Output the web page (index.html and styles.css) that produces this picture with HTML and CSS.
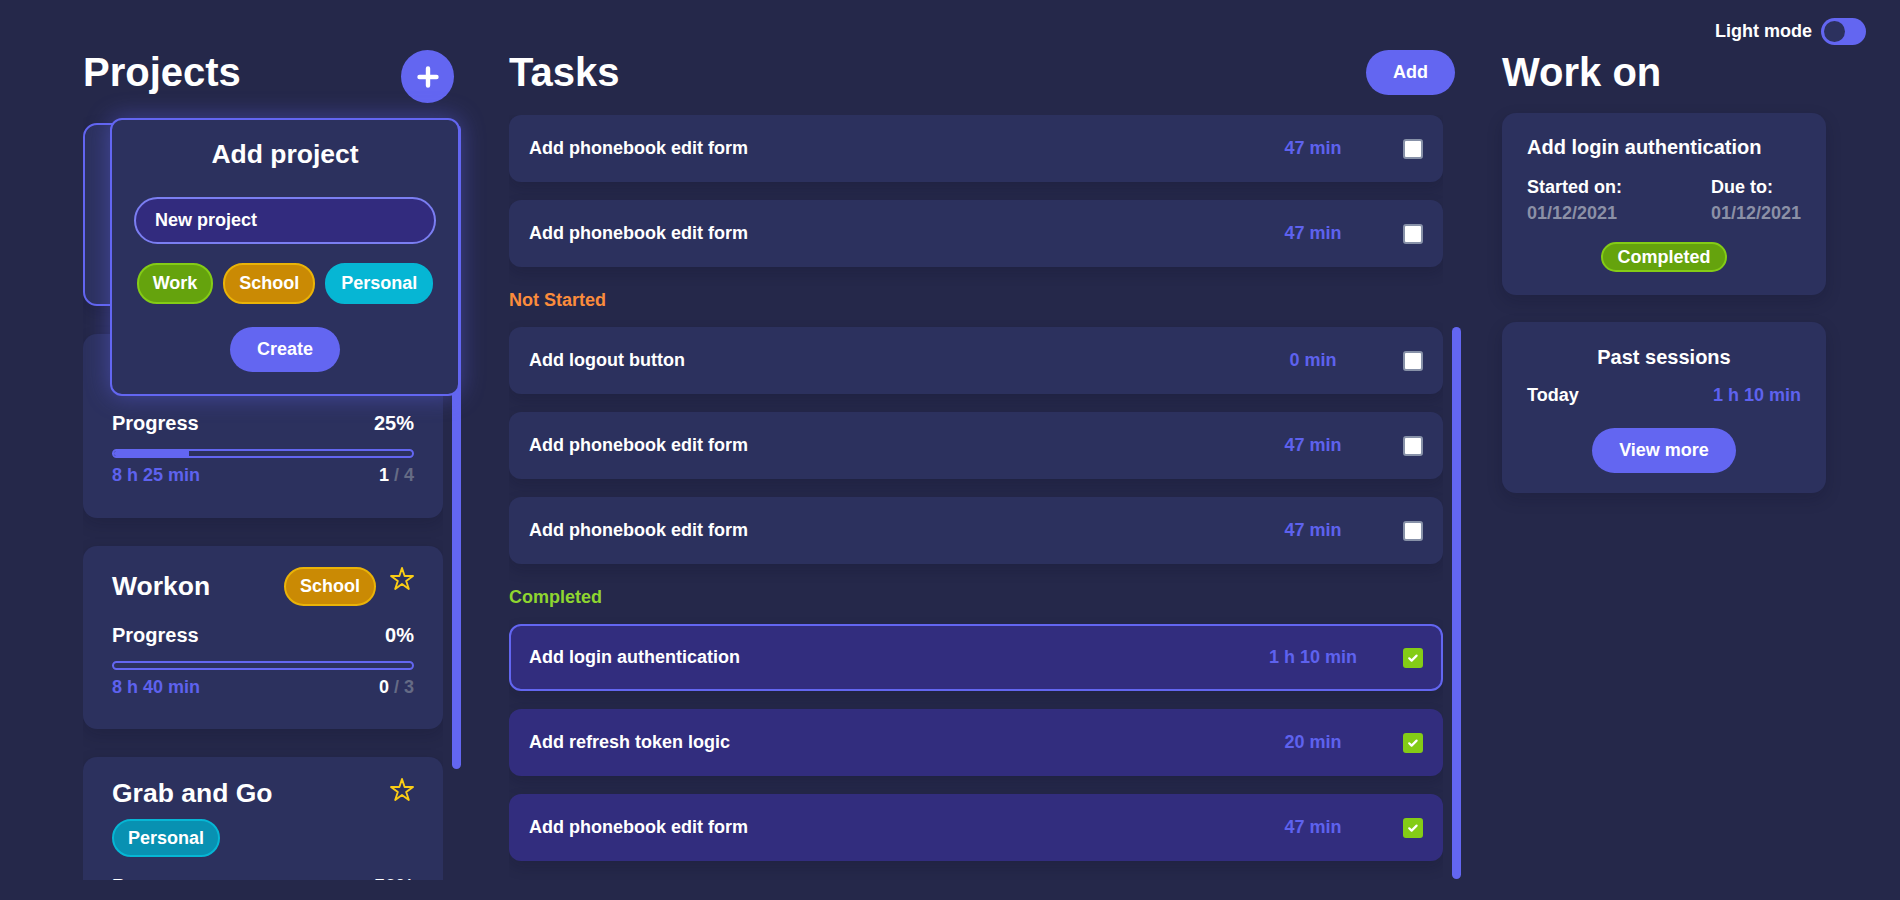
FILE: index.html
```html
<!DOCTYPE html>
<html lang="en">
<head>
<meta charset="utf-8">
<title>Workon</title>
<link rel="stylesheet" href="styles.css">
</head>
<body>
<div class="page">
  <header class="topbar">
    <span class="mode-label">Light mode</span>
    <span class="toggle"><span class="knob"></span></span>
  </header>

  <main class="columns">
    <!-- PROJECTS -->
    <section class="col col-projects">
      <div class="col-head">
        <h1>Projects</h1>
        <button class="round-add" aria-label="Add project">
          <svg width="22" height="22" viewBox="0 0 22 22"><path d="M11 2.5v17M2.5 11h17" stroke="#fff" stroke-width="4.4" stroke-linecap="round" fill="none"/></svg>
        </button>
      </div>

      <div class="list-wrap proj-wrap">
        <div class="list proj-list">
          <article class="pcard selected">
            <div class="ptitle-row">
              <span class="ptitle">Phonebook</span>
              <span class="tag tag-work">Work</span>
              <svg class="star" width="24" height="24" viewBox="0 0 24 24"><path d="M12 1L14.6 8.99H23L16.2 13.94L18.8 21.93L12 16.99L5.2 21.93L7.8 13.94L1 8.99H9.4Z"/></svg>
            </div>
            <div class="progress-row"><span>Progress</span><span>50%</span></div>
            <div class="bar"><div class="fill" style="width:50%"></div></div>
            <div class="time-row"><span class="ptime">3 h 15 min</span><span class="count">2 <span class="muted">/ 4</span></span></div>
          </article>

          <article class="pcard">
            <div class="ptitle-row">
              <span class="ptitle">Todo app</span>
              <span class="tag tag-work">Work</span>
              <svg class="star" width="24" height="24" viewBox="0 0 24 24"><path d="M12 1L14.6 8.99H23L16.2 13.94L18.8 21.93L12 16.99L5.2 21.93L7.8 13.94L1 8.99H9.4Z"/></svg>
            </div>
            <div class="progress-row"><span>Progress</span><span>25%</span></div>
            <div class="bar"><div class="fill" style="width:25%"></div></div>
            <div class="time-row"><span class="ptime">8 h 25 min</span><span class="count">1 <span class="muted">/ 4</span></span></div>
          </article>

          <article class="pcard">
            <div class="ptitle-row">
              <span class="ptitle">Workon</span>
              <span class="tag tag-school">School</span>
              <svg class="star" width="24" height="24" viewBox="0 0 24 24"><path d="M12 1L14.6 8.99H23L16.2 13.94L18.8 21.93L12 16.99L5.2 21.93L7.8 13.94L1 8.99H9.4Z"/></svg>
            </div>
            <div class="progress-row"><span>Progress</span><span>0%</span></div>
            <div class="bar"><div class="fill" style="width:0%"></div></div>
            <div class="time-row"><span class="ptime">8 h 40 min</span><span class="count">0 <span class="muted">/ 3</span></span></div>
          </article>

          <article class="pcard">
            <div class="ptitle-row">
              <span class="ptitle">Grab and Go</span>
              <svg class="star" width="24" height="24" viewBox="0 0 24 24"><path d="M12 1L14.6 8.99H23L16.2 13.94L18.8 21.93L12 16.99L5.2 21.93L7.8 13.94L1 8.99H9.4Z"/></svg>
            </div>
            <div class="tag-row"><span class="tag tag-personal">Personal</span></div>
            <div class="progress-row"><span>Progress</span><span>50%</span></div>
            <div class="bar"><div class="fill" style="width:50%"></div></div>
            <div class="time-row"><span class="ptime">2 h 05 min</span><span class="count">1 <span class="muted">/ 2</span></span></div>
          </article>
        </div>
        <div class="scrollbar"><div class="thumb" style="margin-top:12px;height:644px"></div></div>
      </div>

      <div class="popup">
        <h2>Add project</h2>
        <input class="proj-input" type="text" value="New project">
        <div class="popup-tags">
          <span class="tag ptag tag-work">Work</span>
          <span class="tag ptag tag-school">School</span>
          <span class="tag ptag tag-personal-on">Personal</span>
        </div>
        <button class="pill-btn create">Create</button>
      </div>
    </section>

    <!-- TASKS -->
    <section class="col col-tasks">
      <div class="col-head">
        <h1>Tasks</h1>
        <button class="pill-btn add">Add</button>
      </div>

      <div class="list-wrap task-wrap">
        <div class="list task-list">
          <div class="task"><span class="task-title">Add phonebook edit form</span><span class="task-time">47 min</span><span class="check"></span></div>
          <div class="task"><span class="task-title">Add phonebook edit form</span><span class="task-time">47 min</span><span class="check"></span></div>

          <div class="group-label notstarted">Not Started</div>
          <div class="task"><span class="task-title">Add logout button</span><span class="task-time">0 min</span><span class="check"></span></div>
          <div class="task"><span class="task-title">Add phonebook edit form</span><span class="task-time">47 min</span><span class="check"></span></div>
          <div class="task"><span class="task-title">Add phonebook edit form</span><span class="task-time">47 min</span><span class="check"></span></div>

          <div class="group-label completed">Completed</div>
          <div class="task done active"><span class="task-title">Add login authentication</span><span class="task-time">1 h 10 min</span><span class="check on"><svg width="12" height="12" viewBox="0 0 12 12"><path d="M2.2 6.3l2.4 2.3 5-5" stroke="#fff" stroke-width="2.2" fill="none" stroke-linecap="round" stroke-linejoin="round"/></svg></span></div>
          <div class="task done"><span class="task-title">Add refresh token logic</span><span class="task-time">20 min</span><span class="check on"><svg width="12" height="12" viewBox="0 0 12 12"><path d="M2.2 6.3l2.4 2.3 5-5" stroke="#fff" stroke-width="2.2" fill="none" stroke-linecap="round" stroke-linejoin="round"/></svg></span></div>
          <div class="task done"><span class="task-title">Add phonebook edit form</span><span class="task-time">47 min</span><span class="check on"><svg width="12" height="12" viewBox="0 0 12 12"><path d="M2.2 6.3l2.4 2.3 5-5" stroke="#fff" stroke-width="2.2" fill="none" stroke-linecap="round" stroke-linejoin="round"/></svg></span></div>
        </div>
        <div class="scrollbar"><div class="thumb" style="margin-top:212px;height:552px"></div></div>
      </div>
    </section>

    <!-- WORK ON -->
    <section class="col col-work">
      <div class="col-head">
        <h1>Work on</h1>
      </div>

      <article class="wcard">
        <div class="wtitle">Add login authentication</div>
        <div class="dates">
          <div class="date-col">
            <div>Started on:</div>
            <div class="date">01/12/2021</div>
          </div>
          <div class="date-col">
            <div>Due to:</div>
            <div class="date">01/12/2021</div>
          </div>
        </div>
        <div class="badge-row"><span class="badge">Completed</span></div>
      </article>

      <article class="wcard sessions">
        <div class="wtitle center">Past sessions</div>
        <div class="session-row"><span>Today</span><span class="stime">1 h 10 min</span></div>
        <div class="btn-row"><button class="pill-btn">View more</button></div>
      </article>
    </section>
  </main>
</div>
</body>
</html>
```

FILE: styles.css
```css
* { box-sizing: border-box; }

html, body {
  margin: 0;
  height: 100%;
}

body {
  background: #25284a;
  color: #fff;
  font-family: "Liberation Sans", Arial, sans-serif;
  font-weight: 700;
  overflow: hidden;
}

.page {
  height: 900px;
  display: flex;
  flex-direction: column;
}

/* top bar */
.topbar {
  height: 45px;
  padding: 18px 34px 0 0;
  display: flex;
  justify-content: flex-end;
  align-items: center;
  gap: 9px;
  font-size: 18px;
}

.toggle {
  width: 45px;
  height: 27px;
  border-radius: 14px;
  background: #6366f1;
  padding: 3px;
  display: flex;
}

.knob {
  width: 21px;
  height: 21px;
  border-radius: 50%;
  background: #2c315e;
}

/* columns */
.columns {
  flex: 1;
  min-height: 0;
  display: flex;
  padding: 4px 0 20px 83px;
}

.col {
  display: flex;
  flex-direction: column;
  min-height: 0;
}

.col-projects { width: 378px; position: relative; }
.col-tasks { width: 952px; margin-left: 48px; }
.col-work { width: 324px; margin-left: 41px; }

.col-head {
  height: 56px;
  flex: none;
  display: flex;
  justify-content: space-between;
  align-items: flex-start;
}

h1 {
  margin: 0;
  font-size: 40px;
  line-height: 46px;
  font-weight: 700;
}

button {
  font-family: inherit;
  font-weight: 700;
  color: #fff;
  border: none;
  cursor: pointer;
}

.round-add {
  width: 53px;
  height: 53px;
  margin: 1px 7px 0 0;
  border-radius: 50%;
  background: #6366f1;
  display: flex;
  align-items: center;
  justify-content: center;
  padding: 0;
}

.pill-btn {
  background: #6366f1;
  border-radius: 23px;
  font-size: 18px;
  line-height: 21px;
  padding: 12px 27px;
}

.pill-btn.add { margin: 1px 6px 0 0; }

/* list areas with a styled scrollbar */
.list-wrap {
  flex: 1;
  min-height: 0;
  display: flex;
  gap: 9px;
}

.list {
  flex: 1;
  min-width: 0;
  overflow: hidden;
}

.scrollbar {
  width: 9px;
  flex: none;
}

.thumb {
  width: 9px;
  background: #6366f1;
  border-radius: 5px;
}

.proj-wrap { margin-top: 8px; }
.proj-list { padding-top: 10px; }

.task-wrap { margin-top: 10px; }

/* project cards */
.pcard {
  background: #2c315e;
  border: 2px solid transparent;
  border-radius: 14px;
  padding: 19px 27px 30px;
  margin-bottom: 28px;
  box-shadow: 0 6px 16px rgba(10, 12, 35, 0.18);
}

.pcard.selected { border-color: #6366f1; }

.ptitle-row {
  display: flex;
  align-items: center;
  gap: 14px;
}

.ptitle {
  flex: 1;
  font-size: 26.5px;
  line-height: 30.5px;
}

.star {
  align-self: flex-start;
  flex: none;
  fill: none;
  stroke: #facc15;
  stroke-width: 1.9;
  stroke-linejoin: round;
}

.tag-row {
  display: flex;
  margin-top: 10px;
}

.tag {
  border: 2px solid;
  border-radius: 20px;
  padding: 7px 14px;
  font-size: 18px;
  line-height: 20.7px;
  color: #fff;
}

.tag-work { background: #65a30d; border-color: #84cc16; }
.tag-school { background: #ca8a04; border-color: #eab308; }
.tag-personal { background: #0891b2; border-color: #06b6d4; }
.tag-personal-on { background: #06b6d4; border-color: #06b6d4; }

.progress-row {
  display: flex;
  justify-content: space-between;
  margin-top: 18px;
  font-size: 20px;
  line-height: 23px;
}

.bar {
  height: 9px;
  margin-top: 14px;
  border: 2px solid #6366f1;
  border-radius: 5px;
  overflow: hidden;
}

.fill {
  height: 100%;
  background: #6366f1;
}

.time-row {
  display: flex;
  justify-content: space-between;
  margin-top: 7px;
  font-size: 18px;
  line-height: 20.7px;
}

.ptime { color: #5e62ee; }
.muted { color: #656b85; }

/* popup */
.popup {
  position: absolute;
  top: 69px;
  left: 27px;
  width: 350px;
  z-index: 5;
  background: #2c315e;
  border: 2px solid #6366f1;
  border-radius: 12px;
  padding: 19px 22px 22px;
  text-align: center;
  box-shadow: 0 0 24px rgba(99, 102, 241, 0.45);
}

.popup h2 {
  margin: 0 0 27.5px;
  font-size: 26.5px;
  line-height: 30.5px;
  font-weight: 700;
}

.proj-input {
  display: block;
  width: 100%;
  height: 47px;
  border: 2px solid #7b7ef2;
  border-radius: 24px;
  background: #322b7e;
  color: #fff;
  font-family: inherit;
  font-weight: 700;
  font-size: 18px;
  padding: 0 19px;
  outline: none;
}

.popup-tags {
  display: flex;
  justify-content: center;
  gap: 10px;
  margin-top: 19px;
}

.ptag { padding: 8px 14px; }

.pill-btn.create { margin-top: 23px; }

/* tasks */
.group-label {
  font-size: 18px;
  line-height: 21px;
  padding-top: 5px;
  margin-bottom: 16px;
}

.notstarted { color: #fb8c3c; }
.completed { color: #8fd530; }

.task {
  height: 67px;
  display: flex;
  align-items: center;
  padding: 0 20px;
  margin-bottom: 18px;
  background: #2c315e;
  border-radius: 12px;
  font-size: 18px;
  box-shadow: 0 6px 14px rgba(10, 12, 35, 0.18);
}

.task.done { background: #322d7e; }

.task.active {
  border: 2px solid #6366f1;
  padding: 0 18px;
}

.task-title { flex: 1; }

.task-time {
  width: 110px;
  margin-right: 35px;
  text-align: center;
  color: #5e62ee;
}

.check {
  width: 20px;
  height: 20px;
  flex: none;
  background: #fff;
  border: 2px solid #8791a8;
  border-radius: 3px;
}

.check.on {
  background: #84cc16;
  border-color: #84cc16;
  display: flex;
  align-items: center;
  justify-content: center;
}

/* work on */
.wcard {
  margin-top: 8px;
  background: #2c315e;
  border-radius: 14px;
  padding: 23px 25px;
  box-shadow: 0 6px 16px rgba(10, 12, 35, 0.18);
}

.wtitle {
  font-size: 20px;
  line-height: 23px;
}

.wtitle.center { text-align: center; }

.dates {
  display: flex;
  justify-content: space-between;
  margin-top: 17.6px;
  font-size: 18px;
  line-height: 20.7px;
}

.date {
  margin-top: 6px;
  color: #8b90a6;
}

.badge-row {
  display: flex;
  justify-content: center;
  margin-top: 18px;
}

.badge {
  background: #65a30d;
  border: 2px solid #84cc16;
  border-radius: 15px;
  padding: 2px 14px;
  font-size: 18px;
  line-height: 22px;
}

.wcard.sessions {
  margin-top: 27px;
  padding: 23.5px 25px 20px;
}

.session-row {
  display: flex;
  justify-content: space-between;
  margin-top: 16px;
  font-size: 18px;
  line-height: 20.7px;
}

.stime { color: #5e62ee; }

.btn-row {
  display: flex;
  justify-content: center;
  margin-top: 22.7px;
}
```
